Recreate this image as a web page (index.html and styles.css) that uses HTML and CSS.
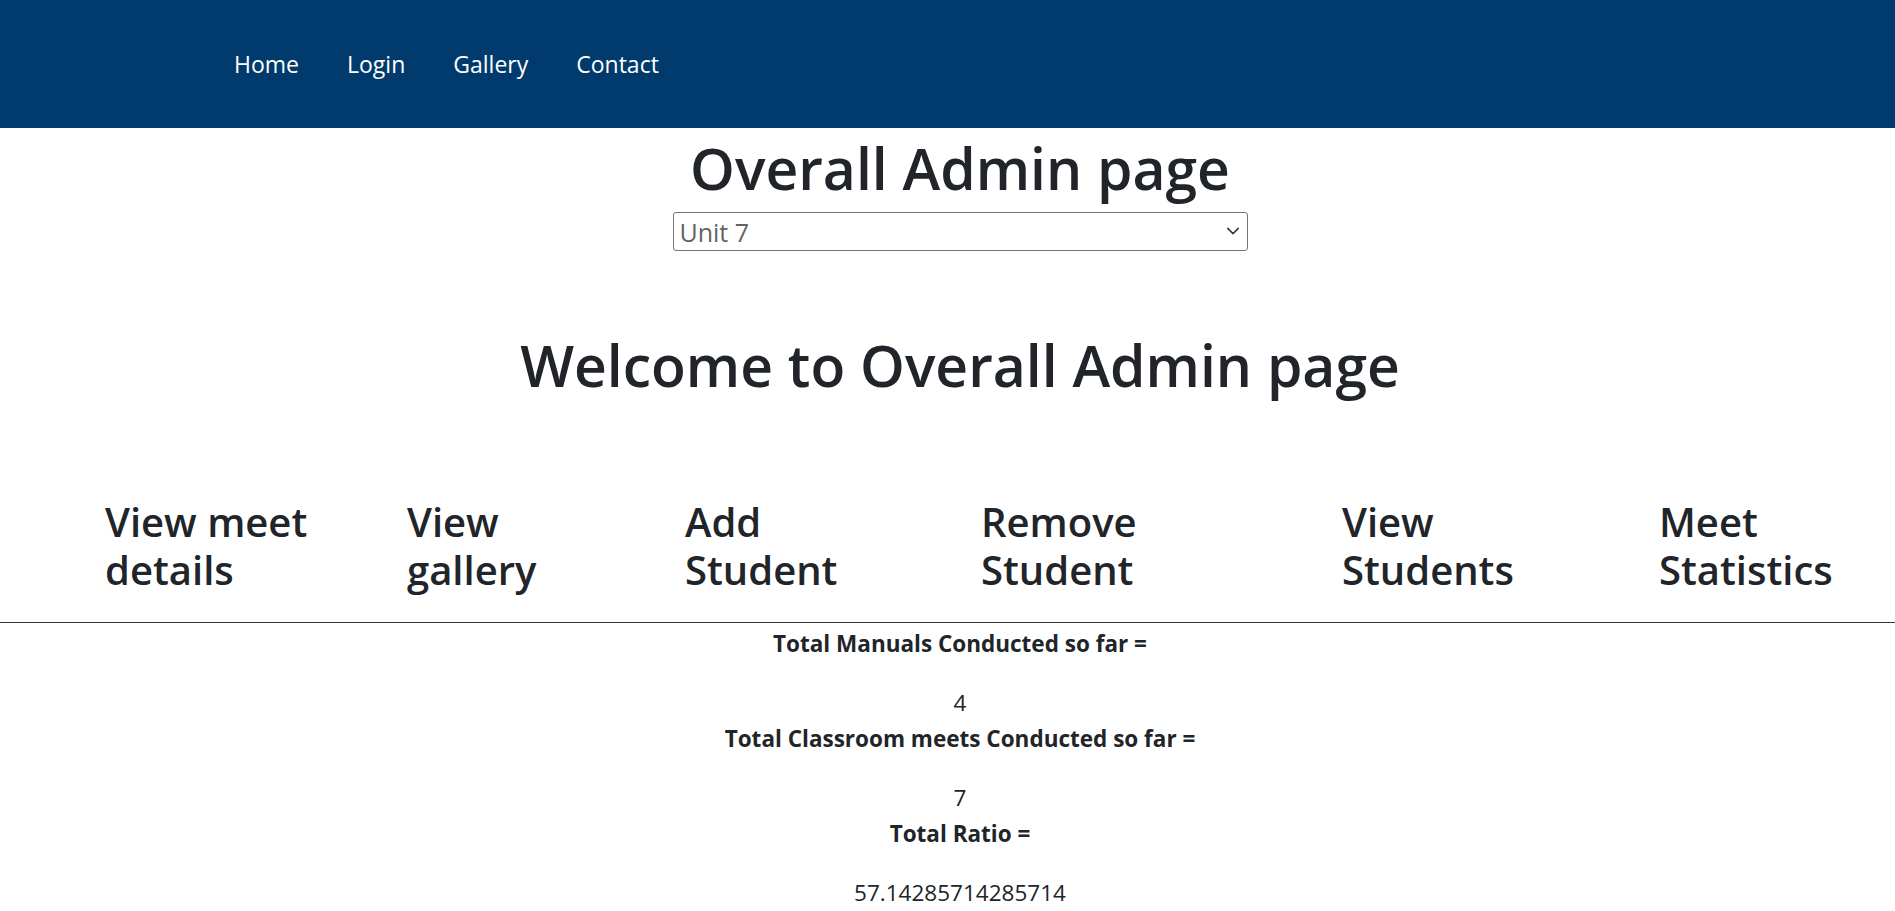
FILE: index.html
```html
<!DOCTYPE html>
<html lang="en">
<head>
<meta charset="utf-8">
<title>Overall Admin page</title>
<link rel="stylesheet" href="styles.css">
</head>
<body>
<nav class="navbar">
  <ul class="nav-links">
    <li><a href="#">Home</a></li>
    <li><a href="#">Login</a></li>
    <li><a href="#">Gallery</a></li>
    <li><a href="#">Contact</a></li>
  </ul>
</nav>
<main>
  <section class="centered">
    <h1 class="title">Overall Admin page</h1>
    <div class="select-wrap">
      <select class="unit-select">
        <option>Unit 7</option>
      </select>
      <svg class="chevron" viewBox="0 0 16 16" width="16" height="16"><path d="M2 5l6 6 6-6" fill="none" stroke="#343a40" stroke-width="1.8" stroke-linecap="round" stroke-linejoin="round"/></svg>
    </div>
    <h1 class="welcome">Welcome to Overall Admin page</h1>
  </section>
  <ul class="menu">
    <li><a href="#">View meet details</a></li>
    <li><a href="#">View gallery</a></li>
    <li><a href="#">Add Student</a></li>
    <li><a href="#">Remove Student</a></li>
    <li><a href="#">View Students</a></li>
    <li><a href="#">Meet Statistics</a></li>
  </ul>
  <hr class="divider">
  <section class="centered stats">
    <p class="label"><b>Total Manuals Conducted so far =</b></p>
    <p class="value">4</p>
    <p class="label"><b>Total Classroom meets Conducted so far =</b></p>
    <p class="value">7</p>
    <p class="label"><b>Total Ratio =</b></p>
    <p class="value">57.14285714285714</p>
  </section>
</main>
</body>
</html>
```
FILE: styles.css
```css
* { box-sizing: border-box; }
html, body { margin: 0; padding: 0; }
body {
  font-family: "Open Sans", "Noto Sans", sans-serif;
  color: #212529;
  background: #fff;
  font-size: 22.5px;
  line-height: 1.5;
}
.navbar {
  background: #013b6d;
  height: 128px;
  display: flex;
  align-items: center;
  padding-left: 234px;
}
.nav-links {
  list-style: none;
  margin: 0;
  padding: 0;
  display: flex;
  gap: 48px;
}
.nav-links a {
  color: #fff;
  text-decoration: none;
  font-size: 23px;
  line-height: 30px;
  display: block;
}
.centered {
  padding-left: 25px;
  text-align: center;
}
.title, .welcome {
  font-size: 57px;
  font-weight: 600;
  line-height: 1.2;
  margin: 0;
}
.title { margin-top: 6px; }
.select-wrap {
  position: relative;
  width: 575px;
  margin: 10px auto 0;
}
.unit-select {
  display: block;
  width: 100%;
  height: 39px;
  appearance: none;
  -webkit-appearance: none;
  border: 1px solid #767676;
  border-radius: 3px;
  background: #fff;
  color: #5f6368;
  font-family: inherit;
  font-size: 25px;
  padding: 0 0 0 6px;
}
.chevron {
  position: absolute;
  right: 8px;
  top: 12px;
  width: 14px;
  height: 14px;
}
.welcome { margin-top: 80px; }
.menu {
  list-style: none;
  margin: 98px 0 0;
  padding: 0 0 0 105px;
  display: grid;
  grid-template-columns: 302px 278px 296px 361px 317px 1fr;
}
.menu li { padding-right: 80px; }
.menu a {
  display: block;
  color: #212529;
  text-decoration: none;
  font-size: 40px;
  font-weight: 600;
  line-height: 48px;
}
.divider {
  border: 0;
  border-top: 1px solid #333;
  margin: 28px 0 3px;
  height: 0;
}
.stats p { margin: 0; line-height: 36px; }
.stats .label { margin-bottom: 23px; }
.stats b { font-weight: 700; }
```
